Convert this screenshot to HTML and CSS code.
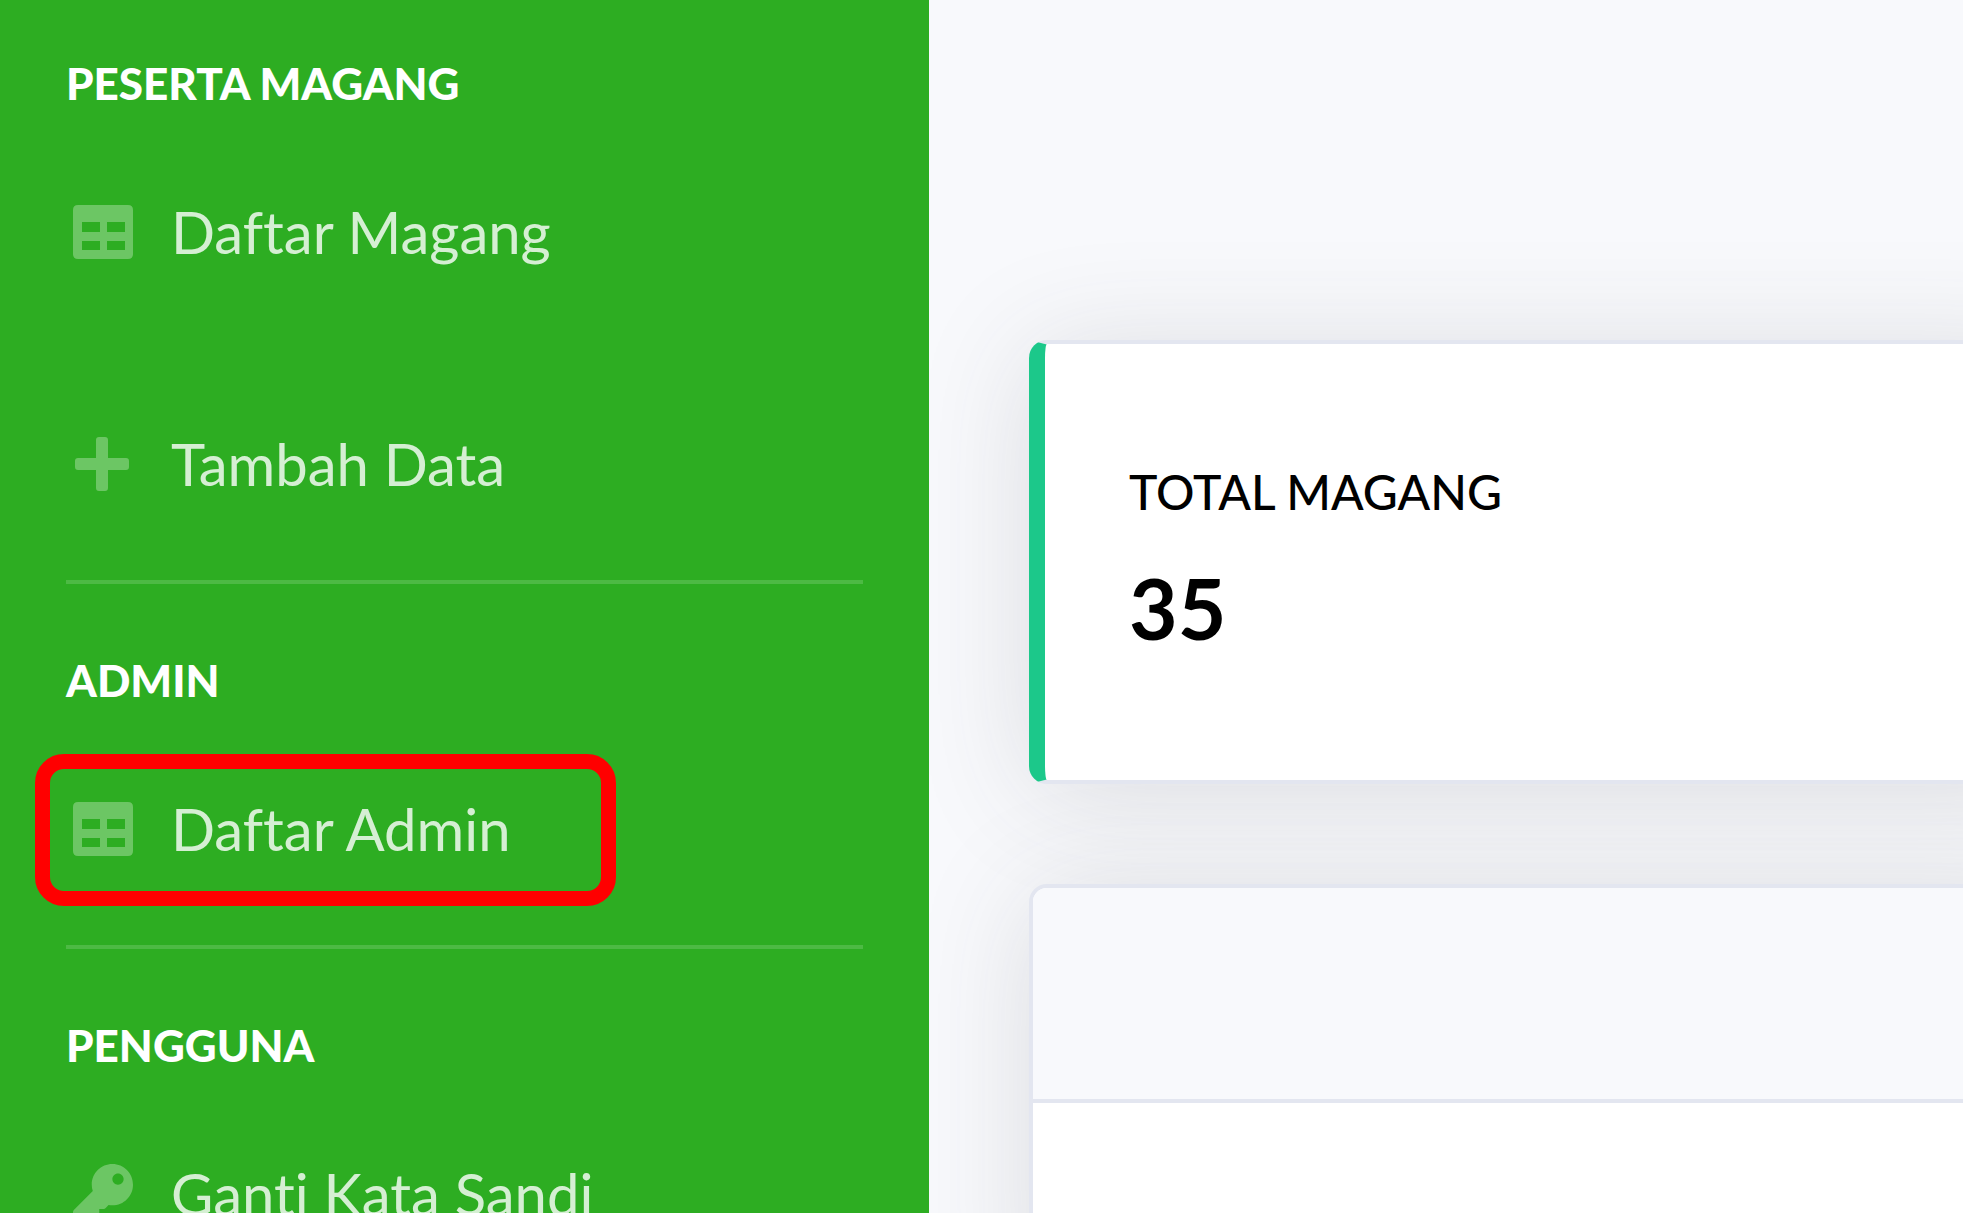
FILE: index.html
```html
<!DOCTYPE html>
<html lang="id">
<head>
<meta charset="utf-8">
<meta name="viewport" content="width=device-width, initial-scale=1">
<title>Dashboard Magang</title>
<link rel="stylesheet" href="styles.css">
</head>
<body>
<div class="layout">
  <nav class="sidebar" aria-label="Menu utama">
    <h2 class="sidebar-heading">Peserta Magang</h2>
    <a class="nav-link" href="#daftar-magang">
      <svg class="nav-icon" viewBox="0 0 60 54" aria-hidden="true"><path fill-rule="evenodd" d="M5 0H55Q60 0 60 5V49Q60 54 55 54H5Q0 54 0 49V5Q0 0 5 0ZM9 17V27H27V17ZM34 17V27H52V17ZM9 36V45H27V36ZM34 36V45H52V36Z"/></svg>
      <span>Daftar Magang</span>
    </a>
    <a class="nav-link" href="#tambah-data">
      <svg class="nav-icon" viewBox="0 0 60 54" aria-hidden="true"><path d="M26 0H32Q35 0 35 3V21H53Q56 21 56 24V30Q56 33 53 33H35V51Q35 54 32 54H26Q23 54 23 51V33H5Q2 33 2 30V24Q2 21 5 21H23V3Q23 0 26 0Z"/></svg>
      <span>Tambah Data</span>
    </a>
    <hr class="sidebar-divider">
    <h2 class="sidebar-heading">Admin</h2>
    <a class="nav-link highlighted" href="#daftar-admin">
      <svg class="nav-icon" viewBox="0 0 60 54" aria-hidden="true"><path fill-rule="evenodd" d="M5 0H55Q60 0 60 5V49Q60 54 55 54H5Q0 54 0 49V5Q0 0 5 0ZM9 17V27H27V17ZM34 17V27H52V17ZM9 36V45H27V36ZM34 36V45H52V36Z"/></svg>
      <span>Daftar Admin</span>
    </a>
    <hr class="sidebar-divider">
    <h2 class="sidebar-heading">Pengguna</h2>
    <a class="nav-link" href="#ganti-kata-sandi">
      <svg class="nav-icon nav-icon-key" viewBox="0 0 512 512" aria-hidden="true"><path d="M512 176.001C512 273.203 433.202 352 336 352c-11.22 0-22.19-1.062-32.827-3.069l-24.012 27.014A23.999 23.999 0 0 1 261.223 384H224v40c0 13.255-10.745 24-24 24h-40v40c0 13.255-10.745 24-24 24H24c-13.255 0-24-10.745-24-24v-78.059c0-6.365 2.529-12.47 7.029-16.971l161.802-161.802C163.108 213.814 160 195.271 160 176 160 78.798 238.797.001 335.999 0 433.488-.001 512 78.511 512 176.001zM336 128c0 26.51 21.49 48 48 48s48-21.49 48-48-21.49-48-48-48-48 21.49-48 48z"/></svg>
      <span>Ganti Kata Sandi</span>
    </a>
  </nav>
  <main class="content">
    <section class="card stat-card">
      <h3 class="stat-label">Total Magang</h3>
      <p class="stat-value">35</p>
    </section>
    <section class="card table-card">
      <div class="card-header"></div>
      <div class="card-body"></div>
    </section>
  </main>
</div>
</body>
</html>
```

FILE: styles.css
```css
*,
*::after {
  box-sizing: border-box;
}

body {
  margin: 0;
  font-family: Lato, "Open Sans", sans-serif;
  font-variant-ligatures: none;
  background: #f8f9fc;
}

.layout {
  display: flex;
  height: 100vh;
  overflow: hidden;
}

/* Sidebar */
.sidebar {
  flex: 0 0 929px;
  padding-top: 50px;
  background: #2dad22;
}

.sidebar-heading {
  margin: 0;
  padding: 0 66px;
  font-size: 44px;
  line-height: 66px;
  font-weight: 900;
  text-transform: uppercase;
  color: #fff;
}

.nav-link {
  position: relative;
  display: flex;
  align-items: center;
  gap: 38px;
  height: 232px;
  padding: 0 73px;
  font-size: 58px;
  line-height: 84px;
  color: #d5efd3;
  text-decoration: none;
}

.nav-icon {
  flex: none;
  width: 60px;
  height: 54px;
  fill: #6cc664;
}

.nav-icon-key {
  height: 60px;
}

.highlighted::after {
  content: "";
  position: absolute;
  top: 41px;
  left: 35px;
  width: 581px;
  height: 152px;
  border: 15px solid #f00;
  border-radius: 29px;
}

.sidebar-divider {
  height: 4px;
  margin: 0 66px 63px;
  border: 0;
  background: #4dba44;
}

/* Content */
.content {
  flex: 1;
  display: flex;
  flex-direction: column;
  gap: 100px;
  padding: 340px 0 0 100px;
  overflow: hidden;
}

.card {
  margin-right: -100px;
  border: 4px solid #e3e6f0;
  border-radius: 18px;
  background: #fff;
  box-shadow: 0 10px 116px rgba(58, 59, 69, 0.15);
}

.stat-card {
  padding: 108px 84px 122px;
  border-left: 16px solid #1cc88a;
}

.stat-label {
  margin: 0 0 26px;
  font-size: 48px;
  line-height: 80px;
  font-weight: 500;
  text-transform: uppercase;
  color: #000;
}

.stat-value {
  margin: 0;
  font-size: 84px;
  line-height: 100px;
  font-weight: 700;
  color: #000;
}

.table-card {
  flex: 1;
  margin-bottom: -100px;
  overflow: hidden;
}

.card-header {
  height: 215px;
  border-bottom: 4px solid #e3e6f0;
  background: #f8f9fc;
}
```
